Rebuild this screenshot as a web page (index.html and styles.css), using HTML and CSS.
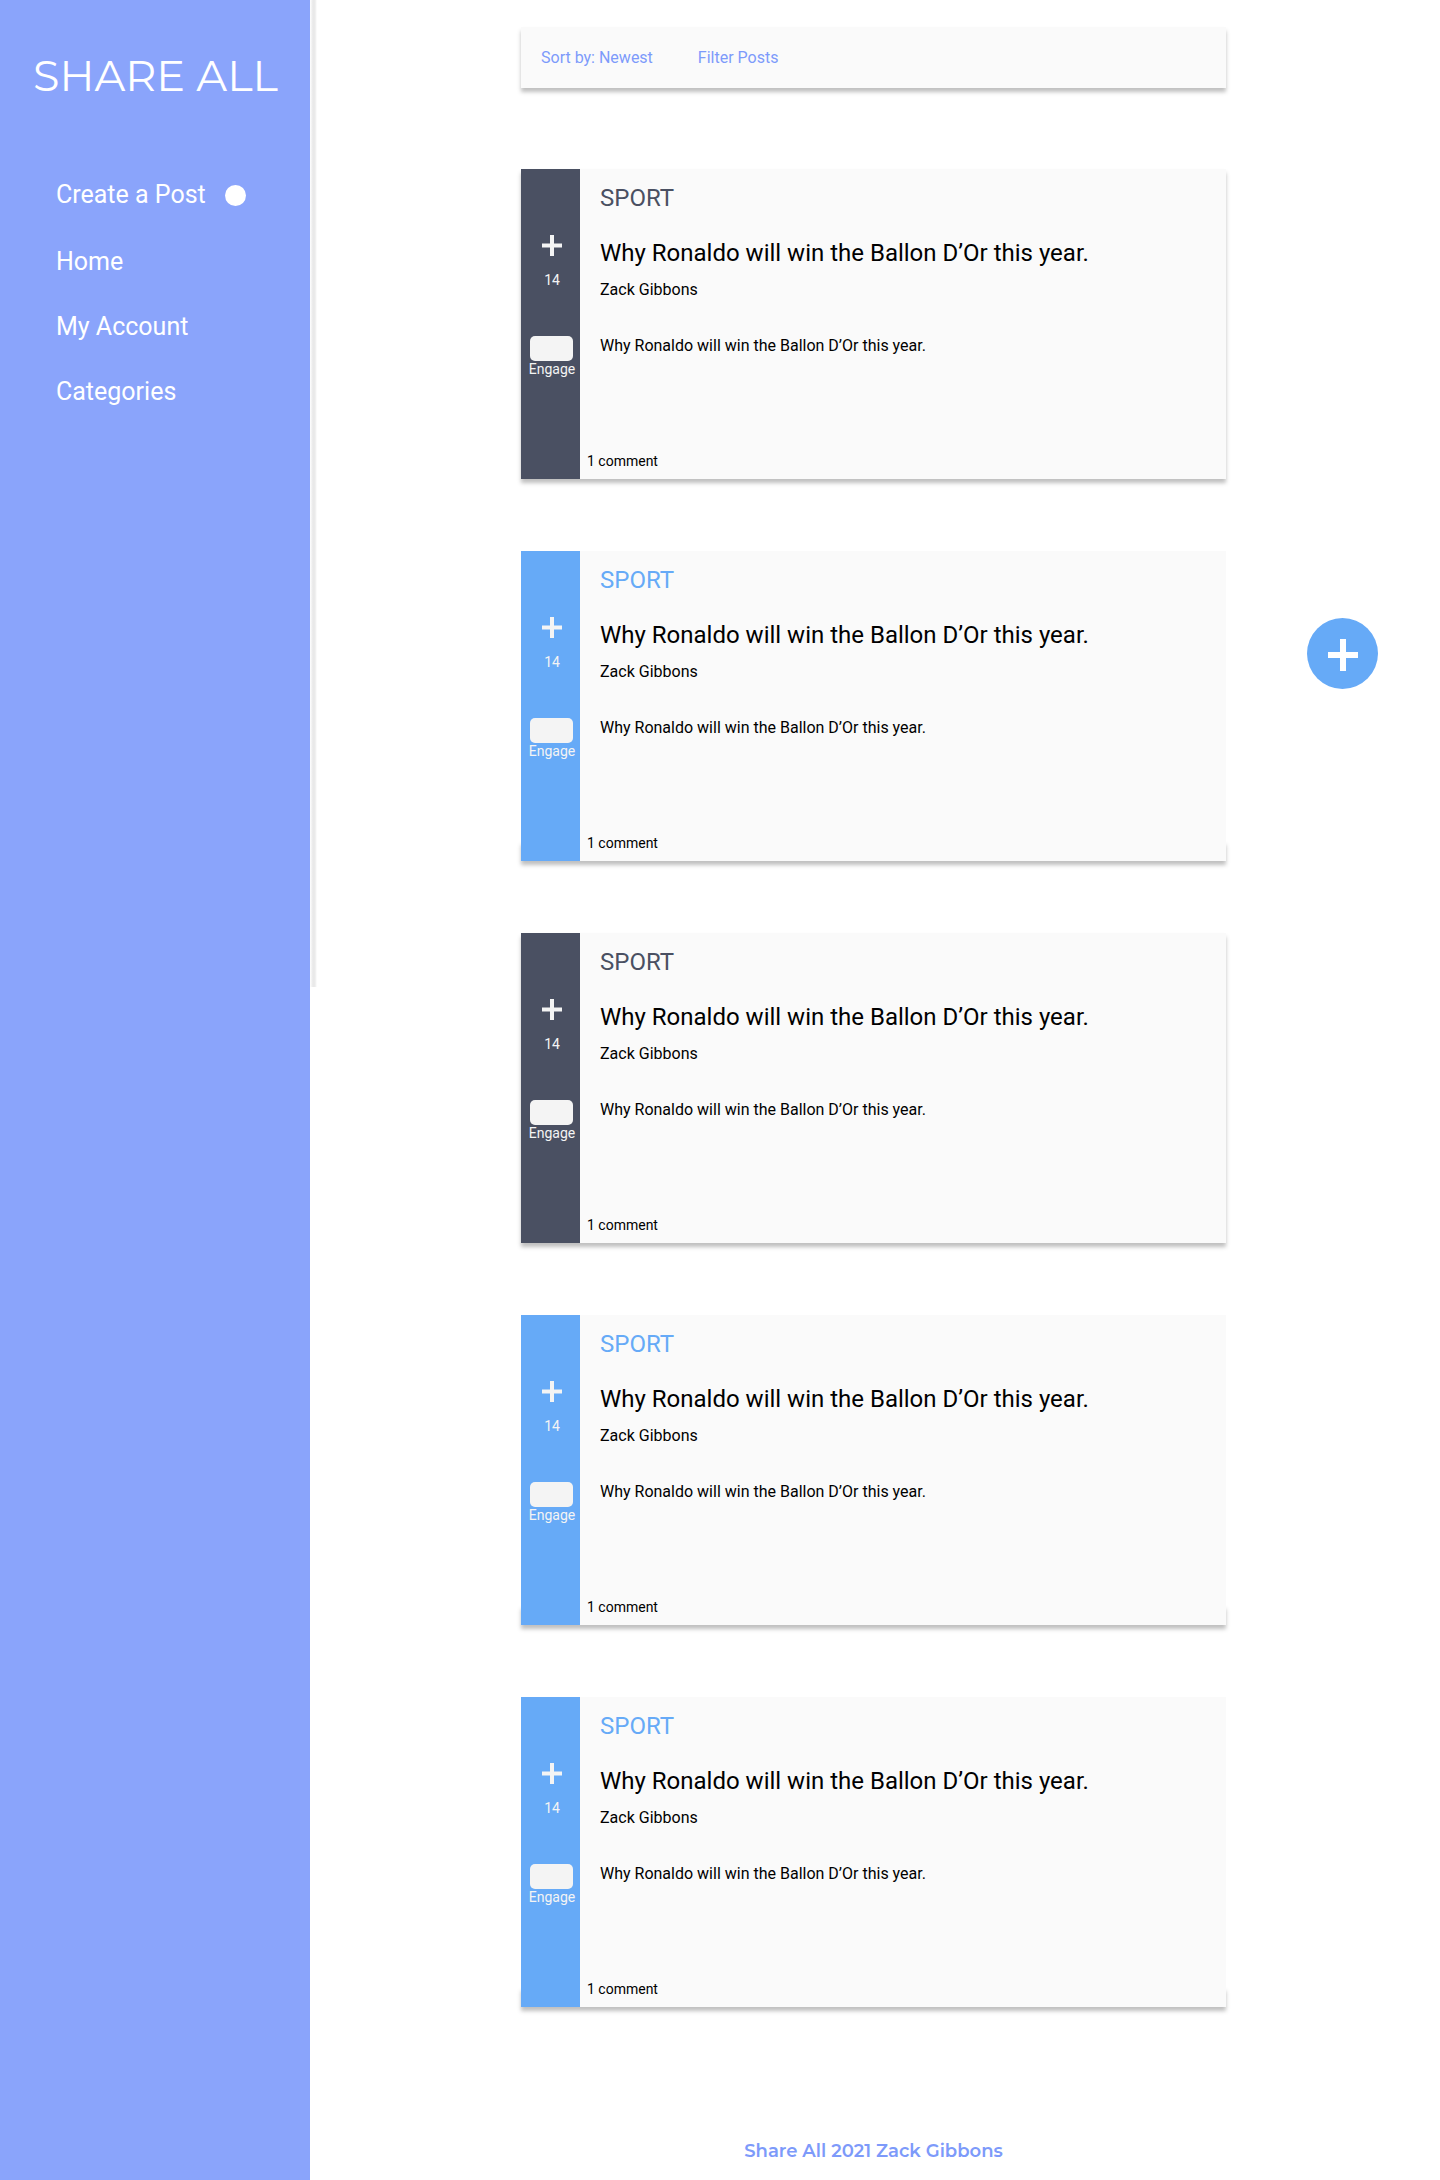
FILE: index.html
```html
<!DOCTYPE html>
<html lang="en">
<head>
<meta charset="utf-8">
<meta name="viewport" content="width=device-width, initial-scale=1">
<title>Share All</title>
<link rel="stylesheet" href="styles.css">
</head>
<body>
<div class="page">
  <header class="sidebar">
    <h1 class="brand">SHARE ALL</h1>
    <nav class="nav">
      <a class="nav-link nav-create" href="#create">Create a Post <span class="dot"></span></a>
      <a class="nav-link" href="#home">Home</a>
      <a class="nav-link" href="#account">My Account</a>
      <a class="nav-link" href="#categories">Categories</a>
    </nav>
  </header>

  <div class="content">
    <main class="feed">
      <div class="toolbar">
        <button class="tool" type="button">Sort by: Newest</button>
        <button class="tool" type="button">Filter Posts</button>
      </div>

      <div class="posts">
        <article class="post">
          <div class="rail">
            <button class="vote" type="button" aria-label="Upvote"><svg class="plus" viewBox="0 0 20 21"><path d="M0 10.5h20M10 0v21"/></svg></button>
            <span class="count">14</span>
            <button class="engage" type="button"><span class="pill"></span>Engage</button>
          </div>
          <div class="post-body">
            <p class="category">SPORT</p>
            <h2 class="title">Why Ronaldo will win the Ballon D’Or this year.</h2>
            <p class="author">Zack Gibbons</p>
            <p class="excerpt">Why Ronaldo will win the Ballon D’Or this year.</p>
            <a class="comments" href="#comments">1 comment</a>
          </div>
        </article>

        <article class="post post-blue">
          <div class="rail">
            <button class="vote" type="button" aria-label="Upvote"><svg class="plus" viewBox="0 0 20 21"><path d="M0 10.5h20M10 0v21"/></svg></button>
            <span class="count">14</span>
            <button class="engage" type="button"><span class="pill"></span>Engage</button>
          </div>
          <div class="post-body">
            <p class="category">SPORT</p>
            <h2 class="title">Why Ronaldo will win the Ballon D’Or this year.</h2>
            <p class="author">Zack Gibbons</p>
            <p class="excerpt">Why Ronaldo will win the Ballon D’Or this year.</p>
            <a class="comments" href="#comments">1 comment</a>
          </div>
        </article>

        <article class="post">
          <div class="rail">
            <button class="vote" type="button" aria-label="Upvote"><svg class="plus" viewBox="0 0 20 21"><path d="M0 10.5h20M10 0v21"/></svg></button>
            <span class="count">14</span>
            <button class="engage" type="button"><span class="pill"></span>Engage</button>
          </div>
          <div class="post-body">
            <p class="category">SPORT</p>
            <h2 class="title">Why Ronaldo will win the Ballon D’Or this year.</h2>
            <p class="author">Zack Gibbons</p>
            <p class="excerpt">Why Ronaldo will win the Ballon D’Or this year.</p>
            <a class="comments" href="#comments">1 comment</a>
          </div>
        </article>

        <article class="post post-blue">
          <div class="rail">
            <button class="vote" type="button" aria-label="Upvote"><svg class="plus" viewBox="0 0 20 21"><path d="M0 10.5h20M10 0v21"/></svg></button>
            <span class="count">14</span>
            <button class="engage" type="button"><span class="pill"></span>Engage</button>
          </div>
          <div class="post-body">
            <p class="category">SPORT</p>
            <h2 class="title">Why Ronaldo will win the Ballon D’Or this year.</h2>
            <p class="author">Zack Gibbons</p>
            <p class="excerpt">Why Ronaldo will win the Ballon D’Or this year.</p>
            <a class="comments" href="#comments">1 comment</a>
          </div>
        </article>

        <article class="post post-blue">
          <div class="rail">
            <button class="vote" type="button" aria-label="Upvote"><svg class="plus" viewBox="0 0 20 21"><path d="M0 10.5h20M10 0v21"/></svg></button>
            <span class="count">14</span>
            <button class="engage" type="button"><span class="pill"></span>Engage</button>
          </div>
          <div class="post-body">
            <p class="category">SPORT</p>
            <h2 class="title">Why Ronaldo will win the Ballon D’Or this year.</h2>
            <p class="author">Zack Gibbons</p>
            <p class="excerpt">Why Ronaldo will win the Ballon D’Or this year.</p>
            <a class="comments" href="#comments">1 comment</a>
          </div>
        </article>
      </div>
    </main>
    <footer class="footer">Share All 2021 Zack Gibbons</footer>
  </div>

  <button class="fab" type="button" aria-label="Create a post"><svg class="fab-plus" viewBox="0 0 30 34"><path d="M0 18h30M15 2v32"/></svg></button>
</div>
</body>
</html>
```
FILE: styles.css
```css
:root {
  --periwinkle: #8aa4fb;
  --blue: #66aaf7;
  --slate: #4a5062;
  --surface: #fafafa;
  --soft: #f4f4f4;
  --lift: 0 4px 4px rgba(0, 0, 0, 0.25);
}

* {
  box-sizing: border-box;
}

body {
  margin: 0;
  background: #fff;
  color: #000;
  font: 16px/20px Roboto, "Liberation Sans", sans-serif;
}

h1, h2, p {
  margin: 0;
  font-weight: 400;
}

a {
  color: inherit;
  text-decoration: none;
}

button {
  padding: 0;
  border: 0;
  background: none;
  color: inherit;
  font: inherit;
  cursor: pointer;
}

.page {
  display: flex;
  min-height: 100vh;
}

/* Sidebar */
.sidebar {
  position: relative;
  flex: 0 0 310px;
  padding-top: 52px;
  background: var(--periwinkle);
  color: #fff;
}

/* Edge shadow covers the first screen only */
.sidebar::after {
  content: "";
  position: absolute;
  top: 0;
  left: 100%;
  width: 7px;
  height: 987px;
  background: linear-gradient(to right, #fff, #e8e8e8 3px, #ebebeb 5px, #fff);
}

.brand {
  padding-left: 33px;
  font: 400 43px/48px Montserrat, Inter, sans-serif;
  white-space: nowrap;
}

.nav {
  display: flex;
  flex-direction: column;
  gap: 37px;
  margin-top: 81px;
  padding-left: 56px;
  font-size: 25px;
  line-height: 28px;
}

.nav-link {
  display: flex;
  align-items: center;
}

.nav-create {
  gap: 19px;
  margin-bottom: 2px;
}

.dot {
  width: 21px;
  height: 21px;
  border-radius: 50%;
  background: #fff;
}

/* Feed */
.content {
  display: flex;
  flex: 1;
  flex-direction: column;
  align-items: center;
  justify-content: space-between;
  gap: 72px;
  padding: 27px 3px 17px 0;
}

.feed {
  width: 100%;
  max-width: 705px;
}

.toolbar {
  display: flex;
  gap: 45px;
  padding: 21px 20px 20px;
  background: var(--surface);
  box-shadow: var(--lift);
  color: #7d9afa;
}

.posts {
  display: flex;
  flex-direction: column;
  gap: 72px;
  margin-top: 81px;
}

.post {
  --accent: var(--slate);
  display: flex;
  min-height: 310px;
  box-shadow: var(--lift);
}

.post-blue {
  --accent: var(--blue);
  position: relative;
  isolation: isolate;
  box-shadow: none;
}

/* Shadow shows only round the foot of a blue post */
.post-blue::before {
  content: "";
  position: absolute;
  z-index: -1;
  inset: auto 0 0;
  height: 20px;
  box-shadow: var(--lift);
}

.rail {
  display: flex;
  flex: 0 0 59px;
  flex-direction: column;
  align-items: center;
  padding: 66px 0 0 3px;
  background: var(--accent);
  color: var(--soft);
  font-size: 14px;
  line-height: 16px;
}

.vote {
  display: flex;
}

.plus {
  width: 20px;
  height: 21px;
  stroke: var(--soft);
  stroke-width: 4;
}

.count {
  margin-top: 16px;
}

.engage {
  margin-top: 48px;
}

.pill {
  display: block;
  width: 43px;
  height: 25px;
  margin: 0 auto;
  border-radius: 5px;
  background: var(--soft);
}

.post-body {
  display: flex;
  flex: 1;
  flex-direction: column;
  padding: 15px 20px 10px;
  background: var(--surface);
}

.category,
.title {
  font-size: 24px;
  line-height: 28px;
}

.category {
  color: var(--accent);
}

.title {
  margin-top: 27px;
}

.author {
  margin-top: 13px;
}

.excerpt {
  margin-top: 36px;
}

.comments {
  margin: auto 0 0 -13px;
  font-size: 14px;
  line-height: 16px;
}

.footer {
  color: #7d9afa;
  font: 600 18px/24px Montserrat, Inter, sans-serif;
}

/* Floating create button */
.fab {
  position: fixed;
  top: 618px;
  right: 62px;
  display: flex;
  align-items: center;
  justify-content: center;
  width: 71px;
  height: 71px;
  border-radius: 50%;
  background: var(--blue);
}

.fab-plus {
  width: 30px;
  height: 34px;
  stroke: #fff;
  stroke-width: 6;
}
```
